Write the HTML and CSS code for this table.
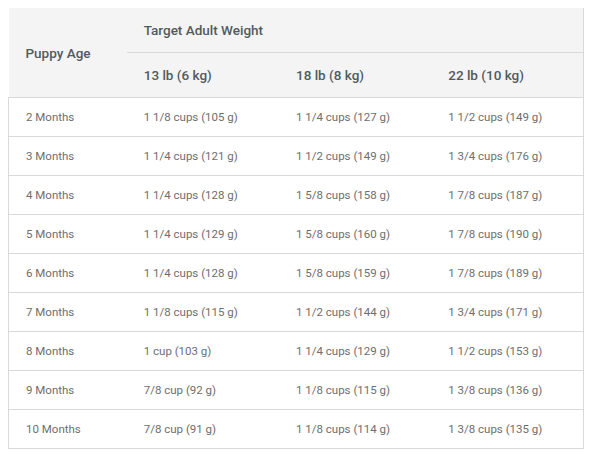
FILE: index.html
```html
<!DOCTYPE html>
<html>
<head>
<meta charset="utf-8">
<link rel="stylesheet" href="styles.css">
</head>
<body>
<table class="feed">
  <colgroup>
    <col class="c-age"><col class="c-w"><col class="c-w"><col class="c-w">
  </colgroup>
  <thead>
    <tr class="h1">
      <th rowspan="2" class="age-h">Puppy Age</th>
      <th colspan="3" class="group-h">Target Adult Weight</th>
    </tr>
    <tr class="h2">
      <th>13 lb (6 kg)</th>
      <th>18 lb (8 kg)</th>
      <th>22 lb (10 kg)</th>
    </tr>
  </thead>
  <tbody>
    <tr><td>2 Months</td><td>1 1/8 cups (105 g)</td><td>1 1/4 cups (127 g)</td><td>1 1/2 cups (149 g)</td></tr>
    <tr><td>3 Months</td><td>1 1/4 cups (121 g)</td><td>1 1/2 cups (149 g)</td><td>1 3/4 cups (176 g)</td></tr>
    <tr><td>4 Months</td><td>1 1/4 cups (128 g)</td><td>1 5/8 cups (158 g)</td><td>1 7/8 cups (187 g)</td></tr>
    <tr><td>5 Months</td><td>1 1/4 cups (129 g)</td><td>1 5/8 cups (160 g)</td><td>1 7/8 cups (190 g)</td></tr>
    <tr><td>6 Months</td><td>1 1/4 cups (128 g)</td><td>1 5/8 cups (159 g)</td><td>1 7/8 cups (189 g)</td></tr>
    <tr><td>7 Months</td><td>1 1/8 cups (115 g)</td><td>1 1/2 cups (144 g)</td><td>1 3/4 cups (171 g)</td></tr>
    <tr><td>8 Months</td><td>1 cup (103 g)</td><td>1 1/4 cups (129 g)</td><td>1 1/2 cups (153 g)</td></tr>
    <tr><td>9 Months</td><td>7/8 cup (92 g)</td><td>1 1/8 cups (115 g)</td><td>1 3/8 cups (136 g)</td></tr>
    <tr><td>10 Months</td><td>7/8 cup (91 g)</td><td>1 1/8 cups (114 g)</td><td>1 3/8 cups (135 g)</td></tr>
  </tbody>
</table>
</body>
</html>
```
FILE: styles.css
```css
body {
  margin: 8px;
  background: #ffffff;
  font-family: Roboto, "Liberation Sans", sans-serif;
}
.feed {
  width: 576px;
  border-collapse: collapse;
  table-layout: fixed;
}
.c-age { width: 118px; }
.c-w { width: 152px; }
.feed th {
  text-align: left;
  font-weight: 500;
  font-size: 13.5px;
  color: #525a60;
  padding: 0 0 0 17px;
  background: #f4f4f4;
  white-space: nowrap;
}
.h1 th { height: 44px; }
.h2 th { height: 44px; border-top: 1px solid #d9d9d9; }
.h1 th.age-h { border-top: none; }
.feed tbody tr { height: 39px; }
.feed td {
  font-size: 11.5px;
  color: #6e6e6e;
  padding: 0 0 0 17px;
  border-top: 1px solid #d9d9d9;
  border-bottom: 1px solid #d9d9d9;
  white-space: nowrap;
}
.feed tbody tr td:first-child { border-left: 1px solid #d9d9d9; }
.feed tbody tr td:last-child { border-right: 1px solid #d9d9d9; }
.feed thead tr th:last-child { border-right: 1px solid #d9d9d9; }
```
